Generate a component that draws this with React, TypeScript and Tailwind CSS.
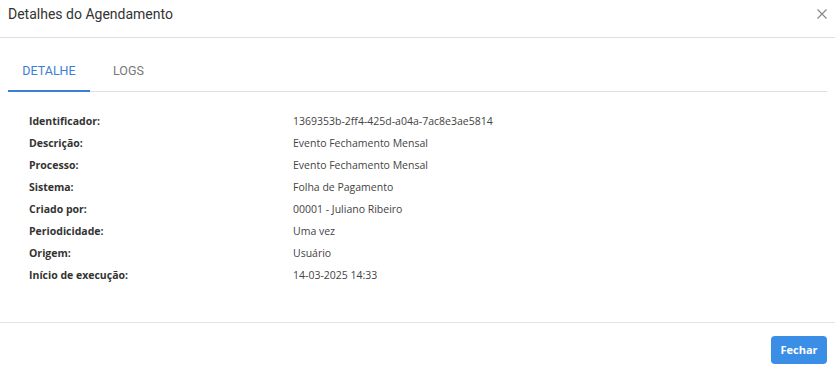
import { useState } from "react";

const rows: [string, string][] = [
  ["Identificador:", "1369353b-2ff4-425d-a04a-7ac8e3ae5814"],
  ["Descrição:", "Evento Fechamento Mensal"],
  ["Processo:", "Evento Fechamento Mensal"],
  ["Sistema:", "Folha de Pagamento"],
  ["Criado por:", "00001 - Juliano Ribeiro"],
  ["Periodicidade:", "Uma vez"],
  ["Origem:", "Usuário"],
  ["Início de execução:", "14-03-2025 14:33"],
];

export default function App() {
  const [tab, setTab] = useState<"detalhe" | "logs">("detalhe");

  return (
    <div className="w-[835px] h-[372px] bg-white flex flex-col font-['Open_Sans',sans-serif]">
      {/* Header */}
      <div className="h-[38px] border-b border-[#dedede] flex items-start justify-between pl-2 pr-2">
        <h1 className="pt-[5px] text-[14px] leading-[18px] text-[#333] font-['Roboto',sans-serif]">
          Detalhes do Agendamento
        </h1>
        <button className="mt-[9px] w-[10px] h-[10px] text-[#888]">
          <svg width="10" height="10" viewBox="0 0 10 10" stroke="currentColor" strokeWidth="1.2">
            <path d="M0.5 0.5 9.5 9.5M9.5 0.5 0.5 9.5" />
          </svg>
        </button>
      </div>

      {/* Tabs */}
      <div className="px-2 pt-[14px]">
        <div className="flex border-b border-[#e0e0e0] font-['Roboto',sans-serif] text-[12.5px]">
          <button
            onClick={() => setTab("detalhe")}
            className={`w-[82px] h-[40px] -mb-px border-b-2 uppercase ${
              tab === "detalhe" ? "border-[#3b7fd4] text-[#3b7fd4]" : "border-transparent text-[#777]"
            }`}
          >
            Detalhe
          </button>
          <button
            onClick={() => setTab("logs")}
            className={`px-[23px] h-[40px] -mb-px border-b-2 uppercase ${
              tab === "logs" ? "border-[#3b7fd4] text-[#3b7fd4]" : "border-transparent text-[#777]"
            }`}
          >
            Logs
          </button>
        </div>
      </div>

      {/* Body */}
      <div className="pt-[19px] pb-[35px] pl-[29px] border-b border-[#e3e3e3]">
        {rows.map(([label, value]) => (
          <div key={label} className="grid grid-cols-[264px_1fr] h-[22px] items-center text-[10.5px]">
            <span className="font-bold text-[#333]">{label}</span>
            <span className="text-[#444]">{value}</span>
          </div>
        ))}
      </div>

      {/* Footer */}
      <div className="flex justify-end pt-[13px] pr-2">
        <button className="w-[56px] h-[28px] rounded-[4px] bg-[#3a8ee6] text-white text-[11px] font-bold">
          Fechar
        </button>
      </div>
    </div>
  );
}
